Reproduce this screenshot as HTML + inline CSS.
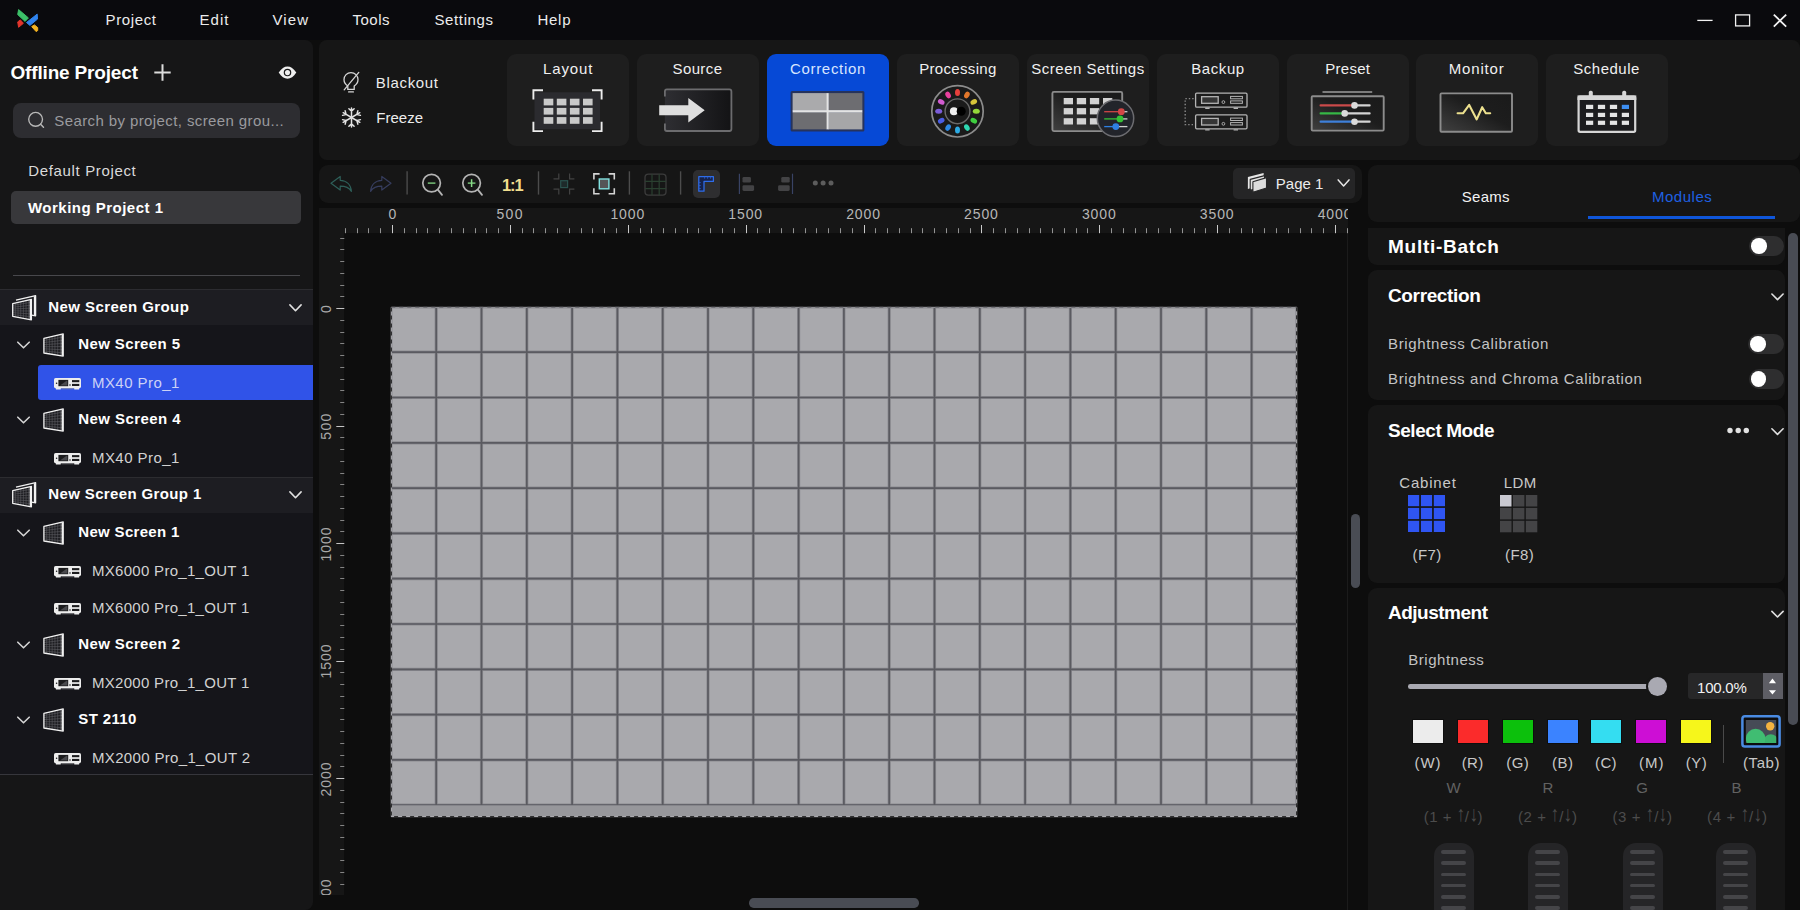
<!DOCTYPE html>
<html lang="en">
<head>
<meta charset="utf-8">
<title>Correction</title>
<style>
*{box-sizing:border-box;margin:0;padding:0}
html,body{width:1800px;height:910px;overflow:hidden;background:#0d0d0d}
body{position:relative;font-family:"Liberation Sans",sans-serif;color:#e6e6e6;font-size:15px}
.a{position:absolute}
.t{position:absolute;white-space:pre;line-height:20px;height:20px}
svg{position:absolute;overflow:visible}
#titlebar{left:0;top:0;width:1800px;height:40px;background:#0a0a0d}
#left{left:0;top:40px;width:313px;height:870px;background:#161617;border-radius:0 8px 8px 0}
#top{left:319px;top:40px;width:1481px;height:120px;background:#161616;border-radius:8px}
.tab{position:absolute;top:54px;width:122px;height:92px;background:#1e1e1e;border-radius:9px}
.tab.sel{background:#0649d6}
#ctb{left:319px;top:165px;width:1043px;height:37.5px;background:#161616;border-radius:9px}
#rtabs{left:1368px;top:165px;width:432px;height:57px;background:#161616;border-radius:9px}
.sec{position:absolute;left:1368px;width:417px;background:#161616;border-radius:9px}
.tog{position:absolute;width:34.6px;height:20px;border-radius:10px;background:#2e2e2f}
.tog i{position:absolute;left:1.8px;top:2.3px;width:15.6px;height:15.6px;border-radius:50%;background:#fff}
.sw{position:absolute;top:719px;width:31.5px;height:24.8px;border:1px solid #0e0e0e}
.ar{display:inline-block;transform:scale(1.15,1.45);transform-origin:50% 82%}
.vs{position:absolute;top:843px;width:39.5px;height:80px;border-radius:13px;background:#252527}
.vs i{position:absolute;left:7px;width:25px;height:3.5px;border-radius:2px;background:#454548}
</style>
</head>
<body>
<!-- TITLE BAR -->
<div id="titlebar" class="a"></div>
<svg style="left:0;top:0" width="60" height="40" viewBox="0 0 60 40" stroke-linejoin="round" stroke-width="1">
<path d="M18.6 9.6 L28.4 17.9 L25.1 21.4 L17.7 14.6 Z" fill="#3cc068" stroke="#3cc068"/>
<path d="M37.2 14.1 L37.5 19.1 L29.9 25.4 L26.5 22.5 Z" fill="#2f83ee" stroke="#2f83ee"/>
<path d="M20.4 19.9 L23.4 23.3 L18.6 27.3 L17.7 21.9 Z" fill="#e2352c" stroke="#e2352c"/>
<path d="M34.4 24.9 L37.7 27.6 L37.7 30.5 L36.1 31.6 L31.7 26.6 Z" fill="#f4b321" stroke="#f4b321"/>
</svg>
<div class="t" style="left:105.50px;top:10.00px;font-size:15px;color:#ececec;letter-spacing:0.635px;">Project</div>
<div class="t" style="left:199.50px;top:10.00px;font-size:15px;color:#ececec;letter-spacing:1.047px;">Edit</div>
<div class="t" style="left:272.50px;top:10.00px;font-size:15px;color:#ececec;letter-spacing:1.083px;">View</div>
<div class="t" style="left:352.50px;top:10.00px;font-size:15px;color:#ececec;letter-spacing:0.492px;">Tools</div>
<div class="t" style="left:434.50px;top:10.00px;font-size:15px;color:#ececec;letter-spacing:0.614px;">Settings</div>
<div class="t" style="left:537.50px;top:10.00px;font-size:15px;color:#ececec;letter-spacing:0.714px;">Help</div>
<svg style="left:1690px;top:8px" width="104" height="24" viewBox="1690 8 104 24" fill="none" stroke="#f2f2f2">
<line x1="1697.3" y1="20.4" x2="1712.6" y2="20.4" stroke-width="1.3"/>
<rect x="1735.6" y="14.9" width="14" height="11" stroke-width="1.3"/>
<path d="M1773.8 14.6 L1786.2 26.6 M1786.2 14.6 L1773.8 26.6" stroke-width="1.8"/>
</svg>
<!-- LEFT PANEL -->
<div id="left" class="a"></div>
<div class="t" style="left:10.50px;top:63.00px;font-size:19px;font-weight:bold;color:#ffffff;letter-spacing:-0.169px;">Offline Project</div>
<svg style="left:0;top:0" width="1" height="1"><path d="M154.3 72.5 H170.7 M162.5 64.3 V80.7" stroke="#dcdcdc" stroke-width="2" fill="none"/></svg>
<svg style="left:278px;top:65px" width="19" height="15" viewBox="0 0 19 15">
<path d="M0.7 7.6 C3.4 3.2 6.3 1.4 9.5 1.4 C12.7 1.4 15.6 3.2 18.3 7.6 C15.6 12 12.7 13.8 9.5 13.8 C6.3 13.8 3.4 12 0.7 7.6 Z" fill="#efefef"/>
<circle cx="9.5" cy="7.6" r="3.75" fill="#161617"/>
<circle cx="9.5" cy="7.6" r="2.55" fill="#efefef"/>
</svg>
<div class="a" style="left:13px;top:103px;width:287px;height:34.5px;border-radius:8px;background:#2d2d31"></div>
<svg style="left:0;top:0" width="1" height="1"><circle cx="35.6" cy="119.3" r="6.9" fill="none" stroke="#b8b8b8" stroke-width="1.35"/><path d="M40.6 124.3 L43.5 127.2" stroke="#b8b8b8" stroke-width="1.45" stroke-linecap="round"/></svg>
<div class="t" style="left:54.30px;top:111.00px;font-size:15px;color:#9a9a9e;letter-spacing:0.397px;">Search by project, screen grou...</div>
<div class="t" style="left:28.30px;top:161.00px;font-size:15px;color:#dadada;letter-spacing:0.651px;">Default Project</div>
<div class="a" style="left:11px;top:191px;width:290px;height:33px;border-radius:5px;background:#38383b"></div>
<div class="t" style="left:28.00px;top:198.00px;font-size:15px;font-weight:bold;color:#ffffff;letter-spacing:0.483px;">Working Project 1</div>
<div class="a" style="left:13px;top:275px;width:287px;height:1px;background:#48484c"></div>
<div class="a" style="left:0;top:288.5px;width:313px;height:486.5px;background:#15151a;border-top:1px solid #2c2c30;border-bottom:1.5px solid #36363c"></div>
<div class="a" style="left:0;top:289.5px;width:313px;height:35.5px;background:#1d1d22"></div>
<svg style="left:12px;top:294.8px" width="25" height="26" viewBox="0 0 25 26"><path d="M4 5.2 L23.6 0.7 L23.6 20.8 L19.6 20.2" fill="none" stroke="#f2f2f2" stroke-width="1.3" stroke-linejoin="round"/><path d="M22.5 1.2 L22.5 20.4" stroke="#f2f2f2" stroke-width="1.3"/><path d="M0.7 8.6 L19.4 4.3 L19.4 24.8 L0.7 21.3 Z" fill="#1b1b1f"/><line x1="3.37" y1="7.99" x2="3.37" y2="21.80" stroke="#5c5c61" stroke-width="0.6"/><line x1="6.04" y1="7.37" x2="6.04" y2="22.30" stroke="#5c5c61" stroke-width="0.6"/><line x1="8.71" y1="6.76" x2="8.71" y2="22.80" stroke="#5c5c61" stroke-width="0.6"/><line x1="11.39" y1="6.14" x2="11.39" y2="23.30" stroke="#5c5c61" stroke-width="0.6"/><line x1="14.06" y1="5.53" x2="14.06" y2="23.80" stroke="#5c5c61" stroke-width="0.6"/><line x1="16.73" y1="4.91" x2="16.73" y2="24.30" stroke="#5c5c61" stroke-width="0.6"/><line x1="0.7" y1="10.41" x2="19.4" y2="7.23" stroke="#5c5c61" stroke-width="0.6"/><line x1="0.7" y1="12.23" x2="19.4" y2="10.16" stroke="#5c5c61" stroke-width="0.6"/><line x1="0.7" y1="14.04" x2="19.4" y2="13.09" stroke="#5c5c61" stroke-width="0.6"/><line x1="0.7" y1="15.86" x2="19.4" y2="16.01" stroke="#5c5c61" stroke-width="0.6"/><line x1="0.7" y1="17.67" x2="19.4" y2="18.94" stroke="#5c5c61" stroke-width="0.6"/><line x1="0.7" y1="19.49" x2="19.4" y2="21.87" stroke="#5c5c61" stroke-width="0.6"/><path d="M0.7 8.6 L19.4 4.3 L19.4 24.8 L0.7 21.3 Z" fill="none" stroke="#f2f2f2" stroke-width="1.3" stroke-linejoin="round"/><path d="M18.4 4.8 L18.4 24.4" stroke="#f2f2f2" stroke-width="1.4"/></svg>
<div class="t" style="left:48.30px;top:297.00px;font-size:15px;font-weight:bold;color:#ffffff;letter-spacing:0.420px;">New Screen Group</div>
<svg style="left:0;top:0" width="1" height="1"><path d="M289.90 304.90 l5.60 5.80 l5.60 -5.80" fill="none" stroke="#e0e0e0" stroke-width="1.6" stroke-linecap="round" stroke-linejoin="round"/></svg>
<svg style="left:0;top:0" width="1" height="1"><path d="M17.80 342.20 l5.70 5.60 l5.70 -5.60" fill="none" stroke="#d4d4d4" stroke-width="1.6" stroke-linecap="round" stroke-linejoin="round"/></svg>
<svg style="left:43px;top:333.3px" width="22" height="24" viewBox="0 0 22 24"><path d="M0.9 5.4 L20.2 0.9 L20.2 23.1 L0.9 20 Z" fill="#1c1c20"/><line x1="3.66" y1="4.76" x2="3.66" y2="20.44" stroke="#5c5c61" stroke-width="0.6"/><line x1="6.41" y1="4.11" x2="6.41" y2="20.89" stroke="#5c5c61" stroke-width="0.6"/><line x1="9.17" y1="3.47" x2="9.17" y2="21.33" stroke="#5c5c61" stroke-width="0.6"/><line x1="11.93" y1="2.83" x2="11.93" y2="21.77" stroke="#5c5c61" stroke-width="0.6"/><line x1="14.69" y1="2.19" x2="14.69" y2="22.21" stroke="#5c5c61" stroke-width="0.6"/><line x1="17.44" y1="1.54" x2="17.44" y2="22.66" stroke="#5c5c61" stroke-width="0.6"/><line x1="0.9" y1="7.49" x2="20.2" y2="4.07" stroke="#5c5c61" stroke-width="0.6"/><line x1="0.9" y1="9.57" x2="20.2" y2="7.24" stroke="#5c5c61" stroke-width="0.6"/><line x1="0.9" y1="11.66" x2="20.2" y2="10.41" stroke="#5c5c61" stroke-width="0.6"/><line x1="0.9" y1="13.74" x2="20.2" y2="13.59" stroke="#5c5c61" stroke-width="0.6"/><line x1="0.9" y1="15.83" x2="20.2" y2="16.76" stroke="#5c5c61" stroke-width="0.6"/><line x1="0.9" y1="17.91" x2="20.2" y2="19.93" stroke="#5c5c61" stroke-width="0.6"/><path d="M0.9 5.4 L20.2 0.9 L20.2 23.1 L0.9 20 Z" fill="none" stroke="#f2f2f2" stroke-width="1.3" stroke-linejoin="round"/><path d="M19.3 1.4 L19.3 22.7" stroke="#f2f2f2" stroke-width="1.4"/></svg>
<div class="t" style="left:78.30px;top:334.00px;font-size:15px;font-weight:bold;color:#ffffff;letter-spacing:0.376px;">New Screen 5</div>
<div class="a" style="left:38px;top:365px;width:275px;height:35px;border-radius:3px 0 0 3px;background:#3053e8"></div>
<svg style="left:54.2px;top:378.0px" width="27" height="12" viewBox="0 0 27 12"><rect x="0" y="0" width="27" height="10.2" rx="1.6" fill="#ededed"/><rect x="1.8" y="9.6" width="5" height="2" rx="0.7" fill="#ededed"/><rect x="20.2" y="9.6" width="5" height="2" rx="0.7" fill="#ededed"/><rect x="7.4" y="10.5" width="12.2" height="0.7" fill="#8c8c90"/><rect x="4.4" y="1.9" width="9.8" height="6.3" fill="#1b1b1d"/><path d="M6 7.4 L12.6 2.7 L13.4 2.7 L13.4 7.4 Z" fill="#4a4a4e"/><circle cx="2.6" cy="5.2" r="0.8" fill="#1b1b1d"/><circle cx="16" cy="7" r="0.8" fill="#1b1b1d"/><rect x="18" y="2.1" width="7.3" height="2.1" fill="#1b1b1d"/><rect x="18" y="5.9" width="7.3" height="2.1" fill="#1b1b1d"/></svg>
<div class="t" style="left:92.00px;top:373.00px;font-size:15px;color:#ccd2f6;letter-spacing:0.434px;">MX40 Pro_1</div>
<svg style="left:0;top:0" width="1" height="1"><path d="M17.80 417.20 l5.70 5.60 l5.70 -5.60" fill="none" stroke="#d4d4d4" stroke-width="1.6" stroke-linecap="round" stroke-linejoin="round"/></svg>
<svg style="left:43px;top:408.3px" width="22" height="24" viewBox="0 0 22 24"><path d="M0.9 5.4 L20.2 0.9 L20.2 23.1 L0.9 20 Z" fill="#1c1c20"/><line x1="3.66" y1="4.76" x2="3.66" y2="20.44" stroke="#5c5c61" stroke-width="0.6"/><line x1="6.41" y1="4.11" x2="6.41" y2="20.89" stroke="#5c5c61" stroke-width="0.6"/><line x1="9.17" y1="3.47" x2="9.17" y2="21.33" stroke="#5c5c61" stroke-width="0.6"/><line x1="11.93" y1="2.83" x2="11.93" y2="21.77" stroke="#5c5c61" stroke-width="0.6"/><line x1="14.69" y1="2.19" x2="14.69" y2="22.21" stroke="#5c5c61" stroke-width="0.6"/><line x1="17.44" y1="1.54" x2="17.44" y2="22.66" stroke="#5c5c61" stroke-width="0.6"/><line x1="0.9" y1="7.49" x2="20.2" y2="4.07" stroke="#5c5c61" stroke-width="0.6"/><line x1="0.9" y1="9.57" x2="20.2" y2="7.24" stroke="#5c5c61" stroke-width="0.6"/><line x1="0.9" y1="11.66" x2="20.2" y2="10.41" stroke="#5c5c61" stroke-width="0.6"/><line x1="0.9" y1="13.74" x2="20.2" y2="13.59" stroke="#5c5c61" stroke-width="0.6"/><line x1="0.9" y1="15.83" x2="20.2" y2="16.76" stroke="#5c5c61" stroke-width="0.6"/><line x1="0.9" y1="17.91" x2="20.2" y2="19.93" stroke="#5c5c61" stroke-width="0.6"/><path d="M0.9 5.4 L20.2 0.9 L20.2 23.1 L0.9 20 Z" fill="none" stroke="#f2f2f2" stroke-width="1.3" stroke-linejoin="round"/><path d="M19.3 1.4 L19.3 22.7" stroke="#f2f2f2" stroke-width="1.4"/></svg>
<div class="t" style="left:78.30px;top:409.00px;font-size:15px;font-weight:bold;color:#ffffff;letter-spacing:0.422px;">New Screen 4</div>
<svg style="left:54.2px;top:453.0px" width="27" height="12" viewBox="0 0 27 12"><rect x="0" y="0" width="27" height="10.2" rx="1.6" fill="#ededed"/><rect x="1.8" y="9.6" width="5" height="2" rx="0.7" fill="#ededed"/><rect x="20.2" y="9.6" width="5" height="2" rx="0.7" fill="#ededed"/><rect x="7.4" y="10.5" width="12.2" height="0.7" fill="#8c8c90"/><rect x="4.4" y="1.9" width="9.8" height="6.3" fill="#1b1b1d"/><path d="M6 7.4 L12.6 2.7 L13.4 2.7 L13.4 7.4 Z" fill="#4a4a4e"/><circle cx="2.6" cy="5.2" r="0.8" fill="#1b1b1d"/><circle cx="16" cy="7" r="0.8" fill="#1b1b1d"/><rect x="18" y="2.1" width="7.3" height="2.1" fill="#1b1b1d"/><rect x="18" y="5.9" width="7.3" height="2.1" fill="#1b1b1d"/></svg>
<div class="t" style="left:92.00px;top:448.00px;font-size:15px;color:#d2d2d2;letter-spacing:0.434px;">MX40 Pro_1</div>
<div class="a" style="left:0;top:477px;width:313px;height:1px;background:#2c2c30"></div>
<div class="a" style="left:0;top:478px;width:313px;height:34.5px;background:#1d1d22"></div>
<svg style="left:12px;top:481.8px" width="25" height="26" viewBox="0 0 25 26"><path d="M4 5.2 L23.6 0.7 L23.6 20.8 L19.6 20.2" fill="none" stroke="#f2f2f2" stroke-width="1.3" stroke-linejoin="round"/><path d="M22.5 1.2 L22.5 20.4" stroke="#f2f2f2" stroke-width="1.3"/><path d="M0.7 8.6 L19.4 4.3 L19.4 24.8 L0.7 21.3 Z" fill="#1b1b1f"/><line x1="3.37" y1="7.99" x2="3.37" y2="21.80" stroke="#5c5c61" stroke-width="0.6"/><line x1="6.04" y1="7.37" x2="6.04" y2="22.30" stroke="#5c5c61" stroke-width="0.6"/><line x1="8.71" y1="6.76" x2="8.71" y2="22.80" stroke="#5c5c61" stroke-width="0.6"/><line x1="11.39" y1="6.14" x2="11.39" y2="23.30" stroke="#5c5c61" stroke-width="0.6"/><line x1="14.06" y1="5.53" x2="14.06" y2="23.80" stroke="#5c5c61" stroke-width="0.6"/><line x1="16.73" y1="4.91" x2="16.73" y2="24.30" stroke="#5c5c61" stroke-width="0.6"/><line x1="0.7" y1="10.41" x2="19.4" y2="7.23" stroke="#5c5c61" stroke-width="0.6"/><line x1="0.7" y1="12.23" x2="19.4" y2="10.16" stroke="#5c5c61" stroke-width="0.6"/><line x1="0.7" y1="14.04" x2="19.4" y2="13.09" stroke="#5c5c61" stroke-width="0.6"/><line x1="0.7" y1="15.86" x2="19.4" y2="16.01" stroke="#5c5c61" stroke-width="0.6"/><line x1="0.7" y1="17.67" x2="19.4" y2="18.94" stroke="#5c5c61" stroke-width="0.6"/><line x1="0.7" y1="19.49" x2="19.4" y2="21.87" stroke="#5c5c61" stroke-width="0.6"/><path d="M0.7 8.6 L19.4 4.3 L19.4 24.8 L0.7 21.3 Z" fill="none" stroke="#f2f2f2" stroke-width="1.3" stroke-linejoin="round"/><path d="M18.4 4.8 L18.4 24.4" stroke="#f2f2f2" stroke-width="1.4"/></svg>
<div class="t" style="left:48.30px;top:484.00px;font-size:15px;font-weight:bold;color:#ffffff;letter-spacing:0.369px;">New Screen Group 1</div>
<svg style="left:0;top:0" width="1" height="1"><path d="M289.90 491.90 l5.60 5.80 l5.60 -5.80" fill="none" stroke="#e0e0e0" stroke-width="1.6" stroke-linecap="round" stroke-linejoin="round"/></svg>
<svg style="left:0;top:0" width="1" height="1"><path d="M17.80 530.20 l5.70 5.60 l5.70 -5.60" fill="none" stroke="#d4d4d4" stroke-width="1.6" stroke-linecap="round" stroke-linejoin="round"/></svg>
<svg style="left:43px;top:521.3px" width="22" height="24" viewBox="0 0 22 24"><path d="M0.9 5.4 L20.2 0.9 L20.2 23.1 L0.9 20 Z" fill="#1c1c20"/><line x1="3.66" y1="4.76" x2="3.66" y2="20.44" stroke="#5c5c61" stroke-width="0.6"/><line x1="6.41" y1="4.11" x2="6.41" y2="20.89" stroke="#5c5c61" stroke-width="0.6"/><line x1="9.17" y1="3.47" x2="9.17" y2="21.33" stroke="#5c5c61" stroke-width="0.6"/><line x1="11.93" y1="2.83" x2="11.93" y2="21.77" stroke="#5c5c61" stroke-width="0.6"/><line x1="14.69" y1="2.19" x2="14.69" y2="22.21" stroke="#5c5c61" stroke-width="0.6"/><line x1="17.44" y1="1.54" x2="17.44" y2="22.66" stroke="#5c5c61" stroke-width="0.6"/><line x1="0.9" y1="7.49" x2="20.2" y2="4.07" stroke="#5c5c61" stroke-width="0.6"/><line x1="0.9" y1="9.57" x2="20.2" y2="7.24" stroke="#5c5c61" stroke-width="0.6"/><line x1="0.9" y1="11.66" x2="20.2" y2="10.41" stroke="#5c5c61" stroke-width="0.6"/><line x1="0.9" y1="13.74" x2="20.2" y2="13.59" stroke="#5c5c61" stroke-width="0.6"/><line x1="0.9" y1="15.83" x2="20.2" y2="16.76" stroke="#5c5c61" stroke-width="0.6"/><line x1="0.9" y1="17.91" x2="20.2" y2="19.93" stroke="#5c5c61" stroke-width="0.6"/><path d="M0.9 5.4 L20.2 0.9 L20.2 23.1 L0.9 20 Z" fill="none" stroke="#f2f2f2" stroke-width="1.3" stroke-linejoin="round"/><path d="M19.3 1.4 L19.3 22.7" stroke="#f2f2f2" stroke-width="1.4"/></svg>
<div class="t" style="left:78.30px;top:522.00px;font-size:15px;font-weight:bold;color:#ffffff;letter-spacing:0.313px;">New Screen 1</div>
<svg style="left:54.2px;top:566.0px" width="27" height="12" viewBox="0 0 27 12"><rect x="0" y="0" width="27" height="10.2" rx="1.6" fill="#ededed"/><rect x="1.8" y="9.6" width="5" height="2" rx="0.7" fill="#ededed"/><rect x="20.2" y="9.6" width="5" height="2" rx="0.7" fill="#ededed"/><rect x="7.4" y="10.5" width="12.2" height="0.7" fill="#8c8c90"/><rect x="4.4" y="1.9" width="9.8" height="6.3" fill="#1b1b1d"/><path d="M6 7.4 L12.6 2.7 L13.4 2.7 L13.4 7.4 Z" fill="#4a4a4e"/><circle cx="2.6" cy="5.2" r="0.8" fill="#1b1b1d"/><circle cx="16" cy="7" r="0.8" fill="#1b1b1d"/><rect x="18" y="2.1" width="7.3" height="2.1" fill="#1b1b1d"/><rect x="18" y="5.9" width="7.3" height="2.1" fill="#1b1b1d"/></svg>
<div class="t" style="left:92.00px;top:561.00px;font-size:15px;color:#d2d2d2;letter-spacing:0.293px;">MX6000 Pro_1_OUT 1</div>
<svg style="left:54.2px;top:603.0px" width="27" height="12" viewBox="0 0 27 12"><rect x="0" y="0" width="27" height="10.2" rx="1.6" fill="#ededed"/><rect x="1.8" y="9.6" width="5" height="2" rx="0.7" fill="#ededed"/><rect x="20.2" y="9.6" width="5" height="2" rx="0.7" fill="#ededed"/><rect x="7.4" y="10.5" width="12.2" height="0.7" fill="#8c8c90"/><rect x="4.4" y="1.9" width="9.8" height="6.3" fill="#1b1b1d"/><path d="M6 7.4 L12.6 2.7 L13.4 2.7 L13.4 7.4 Z" fill="#4a4a4e"/><circle cx="2.6" cy="5.2" r="0.8" fill="#1b1b1d"/><circle cx="16" cy="7" r="0.8" fill="#1b1b1d"/><rect x="18" y="2.1" width="7.3" height="2.1" fill="#1b1b1d"/><rect x="18" y="5.9" width="7.3" height="2.1" fill="#1b1b1d"/></svg>
<div class="t" style="left:92.00px;top:598.00px;font-size:15px;color:#d2d2d2;letter-spacing:0.293px;">MX6000 Pro_1_OUT 1</div>
<svg style="left:0;top:0" width="1" height="1"><path d="M17.80 642.20 l5.70 5.60 l5.70 -5.60" fill="none" stroke="#d4d4d4" stroke-width="1.6" stroke-linecap="round" stroke-linejoin="round"/></svg>
<svg style="left:43px;top:633.3px" width="22" height="24" viewBox="0 0 22 24"><path d="M0.9 5.4 L20.2 0.9 L20.2 23.1 L0.9 20 Z" fill="#1c1c20"/><line x1="3.66" y1="4.76" x2="3.66" y2="20.44" stroke="#5c5c61" stroke-width="0.6"/><line x1="6.41" y1="4.11" x2="6.41" y2="20.89" stroke="#5c5c61" stroke-width="0.6"/><line x1="9.17" y1="3.47" x2="9.17" y2="21.33" stroke="#5c5c61" stroke-width="0.6"/><line x1="11.93" y1="2.83" x2="11.93" y2="21.77" stroke="#5c5c61" stroke-width="0.6"/><line x1="14.69" y1="2.19" x2="14.69" y2="22.21" stroke="#5c5c61" stroke-width="0.6"/><line x1="17.44" y1="1.54" x2="17.44" y2="22.66" stroke="#5c5c61" stroke-width="0.6"/><line x1="0.9" y1="7.49" x2="20.2" y2="4.07" stroke="#5c5c61" stroke-width="0.6"/><line x1="0.9" y1="9.57" x2="20.2" y2="7.24" stroke="#5c5c61" stroke-width="0.6"/><line x1="0.9" y1="11.66" x2="20.2" y2="10.41" stroke="#5c5c61" stroke-width="0.6"/><line x1="0.9" y1="13.74" x2="20.2" y2="13.59" stroke="#5c5c61" stroke-width="0.6"/><line x1="0.9" y1="15.83" x2="20.2" y2="16.76" stroke="#5c5c61" stroke-width="0.6"/><line x1="0.9" y1="17.91" x2="20.2" y2="19.93" stroke="#5c5c61" stroke-width="0.6"/><path d="M0.9 5.4 L20.2 0.9 L20.2 23.1 L0.9 20 Z" fill="none" stroke="#f2f2f2" stroke-width="1.3" stroke-linejoin="round"/><path d="M19.3 1.4 L19.3 22.7" stroke="#f2f2f2" stroke-width="1.4"/></svg>
<div class="t" style="left:78.30px;top:634.00px;font-size:15px;font-weight:bold;color:#ffffff;letter-spacing:0.376px;">New Screen 2</div>
<svg style="left:54.2px;top:678.0px" width="27" height="12" viewBox="0 0 27 12"><rect x="0" y="0" width="27" height="10.2" rx="1.6" fill="#ededed"/><rect x="1.8" y="9.6" width="5" height="2" rx="0.7" fill="#ededed"/><rect x="20.2" y="9.6" width="5" height="2" rx="0.7" fill="#ededed"/><rect x="7.4" y="10.5" width="12.2" height="0.7" fill="#8c8c90"/><rect x="4.4" y="1.9" width="9.8" height="6.3" fill="#1b1b1d"/><path d="M6 7.4 L12.6 2.7 L13.4 2.7 L13.4 7.4 Z" fill="#4a4a4e"/><circle cx="2.6" cy="5.2" r="0.8" fill="#1b1b1d"/><circle cx="16" cy="7" r="0.8" fill="#1b1b1d"/><rect x="18" y="2.1" width="7.3" height="2.1" fill="#1b1b1d"/><rect x="18" y="5.9" width="7.3" height="2.1" fill="#1b1b1d"/></svg>
<div class="t" style="left:92.00px;top:673.00px;font-size:15px;color:#d2d2d2;letter-spacing:0.293px;">MX2000 Pro_1_OUT 1</div>
<svg style="left:0;top:0" width="1" height="1"><path d="M17.80 717.20 l5.70 5.60 l5.70 -5.60" fill="none" stroke="#d4d4d4" stroke-width="1.6" stroke-linecap="round" stroke-linejoin="round"/></svg>
<svg style="left:43px;top:708.3px" width="22" height="24" viewBox="0 0 22 24"><path d="M0.9 5.4 L20.2 0.9 L20.2 23.1 L0.9 20 Z" fill="#1c1c20"/><line x1="3.66" y1="4.76" x2="3.66" y2="20.44" stroke="#5c5c61" stroke-width="0.6"/><line x1="6.41" y1="4.11" x2="6.41" y2="20.89" stroke="#5c5c61" stroke-width="0.6"/><line x1="9.17" y1="3.47" x2="9.17" y2="21.33" stroke="#5c5c61" stroke-width="0.6"/><line x1="11.93" y1="2.83" x2="11.93" y2="21.77" stroke="#5c5c61" stroke-width="0.6"/><line x1="14.69" y1="2.19" x2="14.69" y2="22.21" stroke="#5c5c61" stroke-width="0.6"/><line x1="17.44" y1="1.54" x2="17.44" y2="22.66" stroke="#5c5c61" stroke-width="0.6"/><line x1="0.9" y1="7.49" x2="20.2" y2="4.07" stroke="#5c5c61" stroke-width="0.6"/><line x1="0.9" y1="9.57" x2="20.2" y2="7.24" stroke="#5c5c61" stroke-width="0.6"/><line x1="0.9" y1="11.66" x2="20.2" y2="10.41" stroke="#5c5c61" stroke-width="0.6"/><line x1="0.9" y1="13.74" x2="20.2" y2="13.59" stroke="#5c5c61" stroke-width="0.6"/><line x1="0.9" y1="15.83" x2="20.2" y2="16.76" stroke="#5c5c61" stroke-width="0.6"/><line x1="0.9" y1="17.91" x2="20.2" y2="19.93" stroke="#5c5c61" stroke-width="0.6"/><path d="M0.9 5.4 L20.2 0.9 L20.2 23.1 L0.9 20 Z" fill="none" stroke="#f2f2f2" stroke-width="1.3" stroke-linejoin="round"/><path d="M19.3 1.4 L19.3 22.7" stroke="#f2f2f2" stroke-width="1.4"/></svg>
<div class="t" style="left:78.30px;top:709.00px;font-size:15px;font-weight:bold;color:#ffffff;letter-spacing:0.352px;">ST 2110</div>
<svg style="left:54.2px;top:753.0px" width="27" height="12" viewBox="0 0 27 12"><rect x="0" y="0" width="27" height="10.2" rx="1.6" fill="#ededed"/><rect x="1.8" y="9.6" width="5" height="2" rx="0.7" fill="#ededed"/><rect x="20.2" y="9.6" width="5" height="2" rx="0.7" fill="#ededed"/><rect x="7.4" y="10.5" width="12.2" height="0.7" fill="#8c8c90"/><rect x="4.4" y="1.9" width="9.8" height="6.3" fill="#1b1b1d"/><path d="M6 7.4 L12.6 2.7 L13.4 2.7 L13.4 7.4 Z" fill="#4a4a4e"/><circle cx="2.6" cy="5.2" r="0.8" fill="#1b1b1d"/><circle cx="16" cy="7" r="0.8" fill="#1b1b1d"/><rect x="18" y="2.1" width="7.3" height="2.1" fill="#1b1b1d"/><rect x="18" y="5.9" width="7.3" height="2.1" fill="#1b1b1d"/></svg>
<div class="t" style="left:92.00px;top:748.00px;font-size:15px;color:#d2d2d2;letter-spacing:0.335px;">MX2000 Pro_1_OUT 2</div>
<!-- TOP PANEL -->
<div id="top" class="a"></div>
<svg style="left:340px;top:70px" width="24" height="26" viewBox="340 70 24 26" fill="none" stroke="#d6d6d6" stroke-width="1.3" stroke-linecap="round">
<path d="M347.8 89.4 V86 C345.5 84.6 344 82.3 344 79.6 C344 75.7 347.1 72.6 351 72.6 C354.9 72.6 358 75.7 358 79.6 C358 82.3 356.5 84.6 354.2 86 V89.4 Z"/>
<path d="M348.6 91.9 H353.4"/>
<path d="M344.2 89.8 L358.8 72.4"/>
</svg>
<div class="t" style="left:375.80px;top:73.00px;font-size:15px;color:#ececec;letter-spacing:0.665px;">Blackout</div>
<svg style="left:341px;top:107px" width="21" height="21" viewBox="-10.5 -10.5 21 21" fill="none" stroke="#e2e2e2" stroke-width="1.5" stroke-linecap="round"><g transform="rotate(0)"><path d="M0 0 V-9.6 M-2.6 -8.8 L0 -6.2 L2.6 -8.8"/></g><g transform="rotate(60)"><path d="M0 0 V-9.6 M-2.6 -8.8 L0 -6.2 L2.6 -8.8"/></g><g transform="rotate(120)"><path d="M0 0 V-9.6 M-2.6 -8.8 L0 -6.2 L2.6 -8.8"/></g><g transform="rotate(180)"><path d="M0 0 V-9.6 M-2.6 -8.8 L0 -6.2 L2.6 -8.8"/></g><g transform="rotate(240)"><path d="M0 0 V-9.6 M-2.6 -8.8 L0 -6.2 L2.6 -8.8"/></g><g transform="rotate(300)"><path d="M0 0 V-9.6 M-2.6 -8.8 L0 -6.2 L2.6 -8.8"/></g></svg>
<div class="t" style="left:376.30px;top:108.00px;font-size:15px;color:#ececec;letter-spacing:0.002px;">Freeze</div>
<div class="tab" style="left:507px"></div>
<div class="t" style="left:543.00px;top:59.00px;font-size:15px;color:#f0f0f0;letter-spacing:0.891px;">Layout</div>
<div class="tab" style="left:637px"></div>
<div class="t" style="left:672.50px;top:59.00px;font-size:15px;color:#f0f0f0;letter-spacing:0.394px;">Source</div>
<div class="tab sel" style="left:767px"></div>
<div class="t" style="left:790.00px;top:59.00px;font-size:15px;color:#d8e5ff;letter-spacing:0.677px;">Correction</div>
<div class="tab" style="left:897px"></div>
<div class="t" style="left:919.20px;top:59.00px;font-size:15px;color:#f0f0f0;letter-spacing:0.322px;">Processing</div>
<div class="tab" style="left:1027px"></div>
<div class="t" style="left:1031.30px;top:59.00px;font-size:15px;color:#f0f0f0;letter-spacing:0.500px;">Screen Settings</div>
<div class="tab" style="left:1157px"></div>
<div class="t" style="left:1191.20px;top:59.00px;font-size:15px;color:#f0f0f0;letter-spacing:0.591px;">Backup</div>
<div class="tab" style="left:1287px"></div>
<div class="t" style="left:1325.30px;top:59.00px;font-size:15px;color:#f0f0f0;letter-spacing:0.268px;">Preset</div>
<div class="tab" style="left:1416px"></div>
<div class="t" style="left:1448.70px;top:59.00px;font-size:15px;color:#f0f0f0;letter-spacing:0.845px;">Monitor</div>
<div class="tab" style="left:1546px"></div>
<div class="t" style="left:1573.30px;top:59.00px;font-size:15px;color:#f0f0f0;letter-spacing:0.505px;">Schedule</div>
<svg style="left:0;top:0" width="1800" height="160" viewBox="0 0 1800 160">
<defs>
<linearGradient id="gs" x1="0" y1="0" x2="1" y2="0"><stop offset="0" stop-color="#2e2e32"/><stop offset="1" stop-color="#131315"/></linearGradient>
<linearGradient id="gd" x1="0" y1="1" x2="1" y2="0"><stop offset="0" stop-color="#404040"/><stop offset="0.55" stop-color="#1d1d1d"/><stop offset="1" stop-color="#1a1a1a"/></linearGradient>
</defs>
<g><rect x="534.5" y="92.2" width="65.6" height="37" fill="#2b2b2f"/><path d="M533.4 99.6 V90.3 H543 M592 90.3 H601.6 V99.6 M601.6 121.8 V131.1 H592 M543 131.1 H533.4 V121.8" fill="none" stroke="#ececec" stroke-width="1.9"/><rect x="543.7" y="98.7" width="9.6" height="6.7" fill="#c9c9c9"/><rect x="543.7" y="107.9" width="9.6" height="6.7" fill="#c9c9c9"/><rect x="543.7" y="117.1" width="9.6" height="6.7" fill="#c9c9c9"/><rect x="556.8" y="98.7" width="9.6" height="6.7" fill="#c9c9c9"/><rect x="556.8" y="107.9" width="9.6" height="6.7" fill="#c9c9c9"/><rect x="556.8" y="117.1" width="9.6" height="6.7" fill="#c9c9c9"/><rect x="569.9" y="98.7" width="9.6" height="6.7" fill="#c9c9c9"/><rect x="569.9" y="107.9" width="9.6" height="6.7" fill="#c9c9c9"/><rect x="569.9" y="117.1" width="9.6" height="6.7" fill="#c9c9c9"/><rect x="583.0" y="98.7" width="9.6" height="6.7" fill="#c9c9c9"/><rect x="583.0" y="107.9" width="9.6" height="6.7" fill="#c9c9c9"/><rect x="583.0" y="117.1" width="9.6" height="6.7" fill="#c9c9c9"/></g>
<g>
<rect x="664.9" y="89.4" width="66.5" height="41.6" rx="2" fill="url(#gs)"/>
<path d="M664.9 96.4 V91.4 a2 2 0 0 1 2 -2 H729.4 a2 2 0 0 1 2 2 V129 a2 2 0 0 1 -2 2 H666.9 a2 2 0 0 1 -2 -2 V123.6" fill="none" stroke="#6c6c6e" stroke-width="1.8"/>
<path d="M659.2 105.3 H688.3 V98 L704.7 110.3 L688.3 122.6 V115.3 H659.2 Z" fill="#dedede"/>
</g>
<g>
<rect x="790.6" y="91" width="73.8" height="40.4" rx="1.5" fill="#26335c"/>
<rect x="792.6" y="93.1" width="34.4" height="17.2" fill="#aaaaac"/>
<rect x="828.4" y="93.1" width="34" height="17.2" fill="#6d6d71"/>
<rect x="792.6" y="112.2" width="34.4" height="17.2" fill="#6d6d71"/>
<rect x="828.4" y="112.2" width="34" height="17.2" fill="#a6a6a8"/>
<rect x="826.6" y="93.1" width="2.1" height="36.3" fill="#e4e4e4"/>
<rect x="792.6" y="110.1" width="69.8" height="2.3" fill="#e4e4e4"/>
</g>
<g><circle cx="957.5" cy="111.3" r="25.7" fill="#1a1a1a" stroke="#8c8c8c" stroke-width="1.7"/><circle cx="957.5" cy="111.3" r="12.4" fill="none" stroke="#6a6a6a" stroke-width="1.4"/><ellipse cx="957.5" cy="92.5" rx="2.5" ry="3.5" fill="#e8403c" transform="rotate(0 957.5 111.3)"/><ellipse cx="957.5" cy="92.5" rx="2.5" ry="3.5" fill="#e2772b" transform="rotate(30 957.5 111.3)"/><ellipse cx="957.5" cy="92.5" rx="2.5" ry="3.5" fill="#d6c43a" transform="rotate(60 957.5 111.3)"/><ellipse cx="957.5" cy="92.5" rx="2.5" ry="3.5" fill="#93d63a" transform="rotate(90 957.5 111.3)"/><ellipse cx="957.5" cy="92.5" rx="2.5" ry="3.5" fill="#3fce3f" transform="rotate(120 957.5 111.3)"/><ellipse cx="957.5" cy="92.5" rx="2.5" ry="3.5" fill="#2ed8b2" transform="rotate(150 957.5 111.3)"/><ellipse cx="957.5" cy="92.5" rx="2.5" ry="3.5" fill="#2cabe4" transform="rotate(180 957.5 111.3)"/><ellipse cx="957.5" cy="92.5" rx="2.5" ry="3.5" fill="#2c8ae4" transform="rotate(210 957.5 111.3)"/><ellipse cx="957.5" cy="92.5" rx="2.5" ry="3.5" fill="#4a5ee4" transform="rotate(240 957.5 111.3)"/><ellipse cx="957.5" cy="92.5" rx="2.5" ry="3.5" fill="#7b5cd8" transform="rotate(270 957.5 111.3)"/><ellipse cx="957.5" cy="92.5" rx="2.5" ry="3.5" fill="#d25cd0" transform="rotate(300 957.5 111.3)"/><ellipse cx="957.5" cy="92.5" rx="2.5" ry="3.5" fill="#e8409e" transform="rotate(330 957.5 111.3)"/><circle cx="953.9" cy="111.3" r="4" fill="#f0f0f0"/><circle cx="961.2" cy="111.3" r="4.5" fill="#000"/></g>
<g><rect x="1052.4" y="91.9" width="69.8" height="39.2" rx="1.5" fill="url(#gd)" stroke="#8c8c8c" stroke-width="1.9"/><rect x="1063.7" y="98.0" width="9.3" height="6.3" fill="#d2d2d2"/><rect x="1063.7" y="108.1" width="9.3" height="6.3" fill="#d2d2d2"/><rect x="1063.7" y="118.2" width="9.3" height="6.3" fill="#d2d2d2"/><rect x="1076.8" y="98.0" width="9.3" height="6.3" fill="#d2d2d2"/><rect x="1076.8" y="108.1" width="9.3" height="6.3" fill="#d2d2d2"/><rect x="1076.8" y="118.2" width="9.3" height="6.3" fill="#d2d2d2"/><rect x="1089.9" y="98.0" width="9.3" height="6.3" fill="#d2d2d2"/><rect x="1089.9" y="108.1" width="9.3" height="6.3" fill="#d2d2d2"/><rect x="1089.9" y="118.2" width="9.3" height="6.3" fill="#d2d2d2"/><rect x="1103.0" y="98.0" width="9.3" height="6.3" fill="#d2d2d2"/><rect x="1103.0" y="108.1" width="9.3" height="6.3" fill="#d2d2d2"/><rect x="1103.0" y="118.2" width="9.3" height="6.3" fill="#d2d2d2"/><circle cx="1115.5" cy="118.3" r="18.2" fill="#22242a" stroke="#6c6c70" stroke-width="1.5"/><line x1="1104.2" y1="111.7" x2="1121.3" y2="111.7" stroke="#d24646" stroke-width="1.3"/><line x1="1121.3" y1="111.7" x2="1127.4" y2="111.7" stroke="#cfcfcf" stroke-width="1.3"/><circle cx="1121.3" cy="111.7" r="3.4" fill="#d24646"/><line x1="1104.2" y1="118.9" x2="1120" y2="118.9" stroke="#36c236" stroke-width="1.3"/><line x1="1120" y1="118.9" x2="1127.4" y2="118.9" stroke="#cfcfcf" stroke-width="1.3"/><circle cx="1120" cy="118.9" r="3.4" fill="#36c236"/><line x1="1104.2" y1="126.6" x2="1115.8" y2="126.6" stroke="#2f80e2" stroke-width="1.3"/><line x1="1115.8" y1="126.6" x2="1127.4" y2="126.6" stroke="#cfcfcf" stroke-width="1.3"/><circle cx="1115.8" cy="126.6" r="3.4" fill="#2f80e2"/></g>
<g fill="none" stroke="#b4b4b4" stroke-width="1.3"><rect x="1195.6" y="93.1" width="51.4" height="14" rx="1.2" fill="#1c1c1c"/><rect x="1201.6" y="96.7" width="16.6" height="6.6" fill="#353535"/><circle cx="1223.4" cy="102.1" r="1.4" stroke-width="0.9"/><rect x="1230.6" y="96.4" width="11.8" height="2.4" stroke-width="1"/><rect x="1230.6" y="100.9" width="11.8" height="2.4" stroke-width="1"/><path d="M1205.2 108.2 h4.4 M1233.6 108.2 h4.4" stroke-width="1.4"/><rect x="1195.6" y="114.8" width="51.4" height="14" rx="1.2" fill="#1c1c1c"/><rect x="1201.6" y="118.4" width="16.6" height="6.6" fill="#353535"/><circle cx="1223.4" cy="123.8" r="1.4" stroke-width="0.9"/><rect x="1230.6" y="118.10000000000001" width="11.8" height="2.4" stroke-width="1"/><rect x="1230.6" y="122.60000000000001" width="11.8" height="2.4" stroke-width="1"/><path d="M1205.2 129.9 h4.4 M1233.6 129.9 h4.4" stroke-width="1.4"/><path d="M1193.6 98.6 H1185.2 V124.6 H1193.6" stroke="#8a8a8a" stroke-width="1.4" stroke-dasharray="1.4 2"/></g>
<g><line x1="1322.5" y1="92" x2="1372.2" y2="92" stroke="#9c9c9c" stroke-width="1.4"/><rect x="1311.7" y="96.2" width="72" height="34.4" rx="1" fill="url(#gd)" stroke="#8c8c8c" stroke-width="1.9"/><line x1="1320.6" y1="105.4" x2="1354.5" y2="105.4" stroke="#ca4a4a" stroke-width="2.2" stroke-linecap="round"/><line x1="1354.5" y1="105.4" x2="1369.6" y2="105.4" stroke="#d4d4d4" stroke-width="2.2" stroke-linecap="round"/><circle cx="1354.5" cy="105.4" r="3.3" fill="#dadada"/><line x1="1320.6" y1="113.4" x2="1344.7" y2="113.4" stroke="#36b746" stroke-width="2.2" stroke-linecap="round"/><line x1="1344.7" y1="113.4" x2="1369.6" y2="113.4" stroke="#d4d4d4" stroke-width="2.2" stroke-linecap="round"/><circle cx="1344.7" cy="113.4" r="3.3" fill="#dadada"/><line x1="1320.6" y1="121.7" x2="1354.5" y2="121.7" stroke="#3e80da" stroke-width="2.2" stroke-linecap="round"/><line x1="1354.5" y1="121.7" x2="1369.6" y2="121.7" stroke="#d4d4d4" stroke-width="2.2" stroke-linecap="round"/><circle cx="1354.5" cy="121.7" r="3.3" fill="#dadada"/></g>
<g>
<rect x="1440.5" y="93.4" width="71.5" height="38.3" rx="1" fill="url(#gd)" stroke="#8c8c8c" stroke-width="1.9"/>
<path d="M1457.6 113.3 H1463 L1469.2 104.9 L1476.7 119.4 L1482.2 107.2 L1485.8 113.3 H1490.2" fill="none" stroke="#ece08e" stroke-width="2.1" stroke-linejoin="round" stroke-linecap="round"/>
</g>
<g><rect x="1578.6" y="96.6" width="56.6" height="35.2" rx="1.5" fill="#1c1c1e" stroke="#d6d6d6" stroke-width="2.2"/><rect x="1577.5" y="95.4" width="58.8" height="4.6" fill="#d6d6d6"/><rect x="1588.8" y="90.8" width="4" height="6" rx="1.6" fill="#d6d6d6"/><rect x="1622.2" y="90.8" width="4" height="6" rx="1.6" fill="#d6d6d6"/><rect x="1586.0" y="104.8" width="7.2" height="4.2" fill="#e4e4e4"/><rect x="1586.0" y="112.8" width="7.2" height="4.2" fill="#e4e4e4"/><rect x="1586.0" y="120.7" width="7.2" height="4.2" fill="#e4e4e4"/><rect x="1597.9" y="104.8" width="7.2" height="4.2" fill="#e4e4e4"/><rect x="1597.9" y="112.8" width="7.2" height="4.2" fill="#e4e4e4"/><rect x="1597.9" y="120.7" width="7.2" height="4.2" fill="#e4e4e4"/><rect x="1609.9" y="104.8" width="7.2" height="4.2" fill="#e4e4e4"/><rect x="1609.9" y="112.8" width="7.2" height="4.2" fill="#e4e4e4"/><rect x="1609.9" y="120.7" width="7.2" height="4.2" fill="#e4e4e4"/><rect x="1621.8" y="104.8" width="7.2" height="4.2" fill="#3d8ef2"/><rect x="1621.8" y="112.8" width="7.2" height="4.2" fill="#e4e4e4"/><rect x="1621.8" y="120.7" width="7.2" height="4.2" fill="#e4e4e4"/></g>
</svg>
<!-- CANVAS TOOLBAR -->
<div id="ctb" class="a"></div>
<div class="a" style="left:693px;top:170.3px;width:27px;height:27.4px;border-radius:5px;background:#2e2e30"></div>
<div class="a" style="left:1233px;top:168px;width:122.3px;height:30.7px;border-radius:5px;background:#252526"></div>
<svg style="left:0;top:0" width="1800" height="210" viewBox="0 0 1800 210" fill="none">
<path d="M331 183.3 L340.2 176.5 V180.3 C346.5 180.6 351 184.6 351.4 191.4 C349.2 187.8 345.6 186.2 340.2 186.2 V190.1 Z" stroke="#2e5f59" stroke-width="1.2" stroke-linejoin="round"/>
<path d="M391 183.3 L381.8 176.5 V180.3 C375.5 180.6 371 184.6 370.6 191.4 C372.8 187.8 376.4 186.2 381.8 186.2 V190.1 Z" stroke="#363d5e" stroke-width="1.2" stroke-linejoin="round"/>
<line x1="407.1" y1="171.3" x2="407.1" y2="194.6" stroke="#4c4c4c" stroke-width="1.4"/>
<line x1="538.5" y1="171.3" x2="538.5" y2="194.6" stroke="#4c4c4c" stroke-width="1.4"/>
<line x1="629.4" y1="171.3" x2="629.4" y2="194.6" stroke="#4c4c4c" stroke-width="1.4"/>
<line x1="680.6" y1="171.3" x2="680.6" y2="194.6" stroke="#4c4c4c" stroke-width="1.4"/>
<circle cx="431.6" cy="183.1" r="8.8" stroke="#b4b4b4" stroke-width="1.7"/><path d="M437.8 189.6 L442.0 194.9" stroke="#b4b4b4" stroke-width="1.8" stroke-linecap="round"/><path d="M427.8 183.1 H435.40000000000003" stroke="#86da86" stroke-width="1.3"/>
<circle cx="471.6" cy="183.1" r="8.8" stroke="#b4b4b4" stroke-width="1.7"/><path d="M477.8 189.6 L482.0 194.9" stroke="#b4b4b4" stroke-width="1.8" stroke-linecap="round"/><path d="M467.8 183.1 H475.40000000000003" stroke="#86da86" stroke-width="1.3"/><path d="M471.6 179.2 V187" stroke="#86da86" stroke-width="1.5"/>
<rect x="560.7" y="180.7" width="6.9" height="6.9" fill="#1e2a2a" stroke="#2b524e" stroke-width="1.2"/><path d="M553.5 178.8 H558.8 V173.5 M569.6 173.5 V178.8 H574.4 M574.4 189.2 H569.6 V194.4 M558.8 194.4 V189.2 H553.5" stroke="#424242" stroke-width="1.2"/>
<path d="M593.9 179.4 V173.9 H599.6 M608.6 173.9 H614.3 V179.4 M614.3 188.2 V193.7 H608.6 M599.6 193.7 H593.9 V188.2" stroke="#d4d4d4" stroke-width="1.6"/><rect x="599.3" y="179" width="9.6" height="9.8" fill="#555557" stroke="#82e2e0" stroke-width="1.4"/>
<rect x="645" y="174.2" width="21" height="21" rx="3.4" stroke="#3c3c3c" stroke-width="1.3"/><path d="M652 174.2 V195.2 M659.2 174.2 V195.2 M645 181.3 H666 M645 188.6 H666" stroke="#2a4030" stroke-width="1.2"/>
<path d="M698.8 176.7 H713.4 V181.4 H704 V191.2 H698.8 Z" fill="#16224a" stroke="#2f6dea" stroke-width="1.25" stroke-linejoin="round"/><path d="M704.6 176.7 v2 M707.6 176.7 v2 M710.6 176.7 v2 M698.8 182.6 h2 M698.8 185.6 h2 M698.8 188.6 h2" stroke="#2a5fd0" stroke-width="0.8"/>
<line x1="739.4" y1="173.7" x2="739.4" y2="194" stroke="#394364" stroke-width="1.2"/><rect x="742.5" y="177" width="8.4" height="5.6" rx="1.3" fill="#434345"/><rect x="742.5" y="185.3" width="11.6" height="5.6" rx="1.3" fill="#434345"/>
<line x1="792.5" y1="173.7" x2="792.5" y2="194" stroke="#394364" stroke-width="1.2"/><rect x="781.3" y="177" width="8.4" height="5.6" rx="1.3" fill="#434345"/><rect x="778.1" y="185.3" width="11.6" height="5.6" rx="1.3" fill="#434345"/>
<circle cx="815.3" cy="183.1" r="2.5" fill="#5c5c5c"/><circle cx="823.1" cy="183.1" r="2.5" fill="#5c5c5c"/><circle cx="831" cy="183.1" r="2.5" fill="#5c5c5c"/>
<path d="M1247.9 176.9 L1263.6 173 V184 L1247.9 188.9 Z" fill="#e6e6e6"/><path d="M1250.2 179.4 L1264.6 175.6 V186 L1250.2 190.4 Z" fill="#e0e0e0" stroke="#252526" stroke-width="1.1" stroke-linejoin="round"/><path d="M1252.9 181.7 L1266.5 177.6 V188 L1252.9 192.2 Z" fill="#dcdcdc" stroke="#252526" stroke-width="1.1" stroke-linejoin="round"/>
<path d="M1338.2 179.9 L1343.6 185.9 L1349 179.9" stroke="#e6e6e6" stroke-width="1.5" stroke-linecap="round" stroke-linejoin="round"/>
</svg>
<div class="t" style="left:502.00px;top:175.00px;font-size:16.5px;font-weight:bold;color:#f1de8e;letter-spacing:-1.080px;">1:1</div>
<div class="t" style="left:1275.80px;top:174.00px;font-size:15px;color:#ececec;letter-spacing:-0.009px;">Page 1</div>
<!-- RULERS + CANVAS -->
<div class="a" style="left:319.3px;top:207.5px;width:1028.7px;height:26px;background:#161616"></div>
<div class="a" style="left:319.3px;top:207.5px;width:25px;height:687.5px;background:#161616"></div>
<div class="a" style="left:344.3px;top:233.2px;width:1003.7px;height:676.8px;background:#0d0d0d;border-right:1px solid #1b1b1b"></div>
<svg style="left:0;top:0" width="1800" height="910" viewBox="0 0 1800 910">
<path d="M345.5 228.2V233.2M357.5 228.2V233.2M368.5 228.2V233.2M380.5 228.2V233.2M404.5 228.2V233.2M416.5 228.2V233.2M427.5 228.2V233.2M439.5 228.2V233.2M451.5 228.2V233.2M463.5 228.2V233.2M475.5 228.2V233.2M486.5 228.2V233.2M498.5 228.2V233.2M522.5 228.2V233.2M533.5 228.2V233.2M545.5 228.2V233.2M557.5 228.2V233.2M569.5 228.2V233.2M581.5 228.2V233.2M592.5 228.2V233.2M604.5 228.2V233.2M616.5 228.2V233.2M640.5 228.2V233.2M651.5 228.2V233.2M663.5 228.2V233.2M675.5 228.2V233.2M687.5 228.2V233.2M698.5 228.2V233.2M710.5 228.2V233.2M722.5 228.2V233.2M734.5 228.2V233.2M757.5 228.2V233.2M769.5 228.2V233.2M781.5 228.2V233.2M793.5 228.2V233.2M805.5 228.2V233.2M816.5 228.2V233.2M828.5 228.2V233.2M840.5 228.2V233.2M852.5 228.2V233.2M875.5 228.2V233.2M887.5 228.2V233.2M899.5 228.2V233.2M911.5 228.2V233.2M922.5 228.2V233.2M934.5 228.2V233.2M946.5 228.2V233.2M958.5 228.2V233.2M970.5 228.2V233.2M993.5 228.2V233.2M1005.5 228.2V233.2M1017.5 228.2V233.2M1029.5 228.2V233.2M1040.5 228.2V233.2M1052.5 228.2V233.2M1064.5 228.2V233.2M1076.5 228.2V233.2M1087.5 228.2V233.2M1111.5 228.2V233.2M1123.5 228.2V233.2M1135.5 228.2V233.2M1146.5 228.2V233.2M1158.5 228.2V233.2M1170.5 228.2V233.2M1182.5 228.2V233.2M1194.5 228.2V233.2M1205.5 228.2V233.2M1229.5 228.2V233.2M1241.5 228.2V233.2M1252.5 228.2V233.2M1264.5 228.2V233.2M1276.5 228.2V233.2M1288.5 228.2V233.2M1300.5 228.2V233.2M1311.5 228.2V233.2M1323.5 228.2V233.2M1347.5 228.2V233.2" stroke="#949494" stroke-width="1"/><path d="M392.5 225V233.2M510.5 225V233.2M628.5 225V233.2M746.5 225V233.2M864.5 225V233.2M981.5 225V233.2M1099.5 225V233.2M1217.5 225V233.2M1335.5 225V233.2" stroke="#cacaca" stroke-width="1"/>
<path d="M340.2 238.5H344.3M340.2 249.5H344.3M340.2 261.5H344.3M340.2 273.5H344.3M340.2 285.5H344.3M340.2 296.5H344.3M340.2 320.5H344.3M340.2 332.5H344.3M340.2 343.5H344.3M340.2 355.5H344.3M340.2 367.5H344.3M340.2 379.5H344.3M340.2 390.5H344.3M340.2 402.5H344.3M340.2 414.5H344.3M340.2 437.5H344.3M340.2 449.5H344.3M340.2 461.5H344.3M340.2 473.5H344.3M340.2 484.5H344.3M340.2 496.5H344.3M340.2 508.5H344.3M340.2 520.5H344.3M340.2 531.5H344.3M340.2 555.5H344.3M340.2 567.5H344.3M340.2 578.5H344.3M340.2 590.5H344.3M340.2 602.5H344.3M340.2 614.5H344.3M340.2 625.5H344.3M340.2 637.5H344.3M340.2 649.5H344.3M340.2 672.5H344.3M340.2 684.5H344.3M340.2 696.5H344.3M340.2 708.5H344.3M340.2 719.5H344.3M340.2 731.5H344.3M340.2 743.5H344.3M340.2 755.5H344.3M340.2 766.5H344.3M340.2 790.5H344.3M340.2 802.5H344.3M340.2 813.5H344.3M340.2 825.5H344.3M340.2 837.5H344.3M340.2 849.5H344.3M340.2 860.5H344.3M340.2 872.5H344.3M340.2 884.5H344.3" stroke="#848484" stroke-width="1"/><path d="M336.3 308.5H344.3M336.3 426.5H344.3M336.3 543.5H344.3M336.3 661.5H344.3M336.3 778.5H344.3" stroke="#c4c4c4" stroke-width="1"/>
</svg>
<div class="a" style="left:344px;top:205px;width:1004px;height:22px;overflow:hidden"><div class="t" style="left:44.60px;top:-1.00px;font-size:14px;color:#b6b6b6;letter-spacing:0.000px;">0</div><div class="t" style="left:152.47px;top:-1.00px;font-size:14px;color:#b6b6b6;letter-spacing:1.320px;">500</div><div class="t" style="left:266.45px;top:-1.00px;font-size:14px;color:#b6b6b6;letter-spacing:0.881px;">1000</div><div class="t" style="left:384.33px;top:-1.00px;font-size:14px;color:#b6b6b6;letter-spacing:0.881px;">1500</div><div class="t" style="left:502.20px;top:-1.00px;font-size:14px;color:#b6b6b6;letter-spacing:0.881px;">2000</div><div class="t" style="left:620.08px;top:-1.00px;font-size:14px;color:#b6b6b6;letter-spacing:0.881px;">2500</div><div class="t" style="left:737.95px;top:-1.00px;font-size:14px;color:#b6b6b6;letter-spacing:0.881px;">3000</div><div class="t" style="left:855.83px;top:-1.00px;font-size:14px;color:#b6b6b6;letter-spacing:0.881px;">3500</div><div class="t" style="left:973.70px;top:-1.00px;font-size:14px;color:#b6b6b6;letter-spacing:0.881px;">4000</div></div>
<div class="a" style="left:319.3px;top:233px;width:25px;height:662px;overflow:hidden"><div class="t" style="left:2.80px;top:65.50px;width:7.80px;font-size:14px;color:#a8a8a8;letter-spacing:0.000px;transform:rotate(-90deg)">0</div><div class="t" style="left:-6.96px;top:183.00px;width:27.32px;font-size:14px;color:#a8a8a8;letter-spacing:1.320px;transform:rotate(-90deg)">500</div><div class="t" style="left:-10.91px;top:300.50px;width:35.21px;font-size:14px;color:#a8a8a8;letter-spacing:1.015px;transform:rotate(-90deg)">1000</div><div class="t" style="left:-10.91px;top:418.00px;width:35.21px;font-size:14px;color:#a8a8a8;letter-spacing:1.015px;transform:rotate(-90deg)">1500</div><div class="t" style="left:-10.91px;top:535.50px;width:35.21px;font-size:14px;color:#a8a8a8;letter-spacing:1.015px;transform:rotate(-90deg)">2000</div><div class="t" style="left:-10.91px;top:653.00px;width:35.21px;font-size:14px;color:#a8a8a8;letter-spacing:1.015px;transform:rotate(-90deg)">2500</div></div>
<div class="a" style="left:390.9px;top:306.9px;width:906.2px;height:510.2px;background:#97979b"></div>
<div class="a" style="left:390.9px;top:306.9px;width:906.2px;height:498.30px;background:#a9a9ad"></div>
<svg style="left:0;top:0" width="1800" height="910" viewBox="0 0 1800 910">
<defs><clipPath id="scr"><rect x="390.9" y="306.9" width="906.2" height="498.30"/></clipPath></defs>
<g clip-path="url(#scr)"><path d="M390.90 306.9V805.20M436.20 306.9V805.20M481.50 306.9V805.20M526.80 306.9V805.20M572.10 306.9V805.20M617.40 306.9V805.20M662.70 306.9V805.20M708.00 306.9V805.20M753.30 306.9V805.20M798.60 306.9V805.20M843.90 306.9V805.20M889.20 306.9V805.20M934.50 306.9V805.20M979.80 306.9V805.20M1025.10 306.9V805.20M1070.40 306.9V805.20M1115.70 306.9V805.20M1161.00 306.9V805.20M1206.30 306.9V805.20M1251.60 306.9V805.20M1296.90 306.9V805.20M390.9 306.90H1297.1M390.9 352.20H1297.1M390.9 397.50H1297.1M390.9 442.80H1297.1M390.9 488.10H1297.1M390.9 533.40H1297.1M390.9 578.70H1297.1M390.9 624.00H1297.1M390.9 669.30H1297.1M390.9 714.60H1297.1M390.9 759.90H1297.1M390.9 805.20H1297.1" stroke="#8b8b90" stroke-width="3.2" fill="none"/><path d="M390.90 306.9V805.20M436.20 306.9V805.20M481.50 306.9V805.20M526.80 306.9V805.20M572.10 306.9V805.20M617.40 306.9V805.20M662.70 306.9V805.20M708.00 306.9V805.20M753.30 306.9V805.20M798.60 306.9V805.20M843.90 306.9V805.20M889.20 306.9V805.20M934.50 306.9V805.20M979.80 306.9V805.20M1025.10 306.9V805.20M1070.40 306.9V805.20M1115.70 306.9V805.20M1161.00 306.9V805.20M1206.30 306.9V805.20M1251.60 306.9V805.20M1296.90 306.9V805.20M390.9 306.90H1297.1M390.9 352.20H1297.1M390.9 397.50H1297.1M390.9 442.80H1297.1M390.9 488.10H1297.1M390.9 533.40H1297.1M390.9 578.70H1297.1M390.9 624.00H1297.1M390.9 669.30H1297.1M390.9 714.60H1297.1M390.9 759.90H1297.1M390.9 805.20H1297.1" stroke="#5a5a60" stroke-width="1.7" fill="none"/></g>
<path d="M391.29999999999995 307.29999999999995H1296.6999999999998" stroke="#9c9ca0" stroke-width="1" fill="none"/><path d="M391.29999999999995 307.29999999999995H1296.6999999999998" stroke="#68686e" stroke-width="1" stroke-dasharray="4 4" fill="none"/><path d="M1296.6999999999998 307.29999999999995V816.6999999999999H391.29999999999995V307.29999999999995" stroke="#b0b0b4" stroke-width="1" fill="none"/><path d="M1296.6999999999998 307.29999999999995V816.6999999999999H391.29999999999995V307.29999999999995" stroke="#141414" stroke-width="1" stroke-dasharray="4 4" fill="none"/>
</svg>
<div class="a" style="left:1350.5px;top:513.8px;width:9px;height:74.2px;border-radius:4.5px;background:#494c54"></div>
<div class="a" style="left:749px;top:898px;width:170px;height:9.5px;border-radius:4.7px;background:#494c54"></div>
<!-- RIGHT PANEL -->
<div id="rtabs" class="a"></div>
<div class="t" style="left:1461.80px;top:187.00px;font-size:15px;color:#f2f2f2;letter-spacing:0.253px;">Seams</div>
<div class="t" style="left:1652.00px;top:187.00px;font-size:15px;color:#1f60e2;letter-spacing:0.516px;">Modules</div>
<div class="a" style="left:1587.5px;top:215.8px;width:187.5px;height:3.6px;background:#0f56da"></div>
<div class="sec" style="top:228px;height:36.5px;border-radius:0 0 9px 9px"></div>
<div class="sec" style="top:270px;height:129.5px"></div>
<div class="sec" style="top:405px;height:177.5px"></div>
<div class="sec" style="top:588px;height:330px"></div>
<div class="a" style="left:1787.8px;top:232.5px;width:9.8px;height:492px;border-radius:4.9px;background:#494c54"></div>
<div class="t" style="left:1388.00px;top:237.00px;font-size:19px;font-weight:bold;color:#ffffff;letter-spacing:0.736px;">Multi-Batch</div>
<div class="tog" style="left:1749.2px;top:236.1px"><i></i></div>
<div class="t" style="left:1388.00px;top:286.00px;font-size:19px;font-weight:bold;color:#ffffff;letter-spacing:-0.364px;">Correction</div>
<svg style="left:0;top:0" width="1" height="1"><path d="M1771.90 294.00 l5.60 5.60 l5.60 -5.60" fill="none" stroke="#e0e0e0" stroke-width="1.6" stroke-linecap="round" stroke-linejoin="round"/></svg>
<div class="t" style="left:1388.00px;top:334.00px;font-size:15px;color:#c4c4c4;letter-spacing:0.645px;">Brightness Calibration</div>
<div class="tog" style="left:1748.3px;top:333.9px;width:35.6px"><i></i></div>
<div class="t" style="left:1388.00px;top:369.00px;font-size:15px;color:#c4c4c4;letter-spacing:0.636px;">Brightness and Chroma Calibration</div>
<div class="tog" style="left:1749.1px;top:369.1px;width:35px"><i></i></div>
<div class="t" style="left:1388.00px;top:421.00px;font-size:19px;font-weight:bold;color:#ffffff;letter-spacing:-0.438px;">Select Mode</div>
<svg style="left:0;top:0" width="1" height="1"><circle cx="1730" cy="430.5" r="2.7" fill="#e2e2e2"/><circle cx="1738.2" cy="430.5" r="2.7" fill="#e2e2e2"/><circle cx="1746.3" cy="430.5" r="2.7" fill="#e2e2e2"/></svg>
<svg style="left:0;top:0" width="1" height="1"><path d="M1771.90 428.80 l5.60 5.60 l5.60 -5.60" fill="none" stroke="#e0e0e0" stroke-width="1.6" stroke-linecap="round" stroke-linejoin="round"/></svg>
<div class="t" style="left:1399.30px;top:473.00px;font-size:15px;color:#c8c8c8;letter-spacing:0.799px;">Cabinet</div>
<div class="t" style="left:1503.80px;top:473.00px;font-size:15px;color:#c8c8c8;letter-spacing:0.414px;">LDM</div>
<svg style="left:0;top:0" width="1" height="1"><rect x="1408.0" y="495.0" width="11.2" height="11.2" fill="#2f55f2"/><rect x="1500.0" y="495.0" width="11.5" height="11.5" fill="#c9c9d1"/><rect x="1420.9" y="495.0" width="11.2" height="11.2" fill="#2f55f2"/><rect x="1512.9" y="495.0" width="11.5" height="11.5" fill="#444446"/><rect x="1433.8" y="495.0" width="11.2" height="11.2" fill="#2f55f2"/><rect x="1525.8" y="495.0" width="11.5" height="11.5" fill="#444446"/><rect x="1408.0" y="507.9" width="11.2" height="11.2" fill="#2f55f2"/><rect x="1500.0" y="507.9" width="11.5" height="11.5" fill="#444446"/><rect x="1420.9" y="507.9" width="11.2" height="11.2" fill="#2f55f2"/><rect x="1512.9" y="507.9" width="11.5" height="11.5" fill="#444446"/><rect x="1433.8" y="507.9" width="11.2" height="11.2" fill="#2f55f2"/><rect x="1525.8" y="507.9" width="11.5" height="11.5" fill="#444446"/><rect x="1408.0" y="520.8" width="11.2" height="11.2" fill="#2f55f2"/><rect x="1500.0" y="520.8" width="11.5" height="11.5" fill="#444446"/><rect x="1420.9" y="520.8" width="11.2" height="11.2" fill="#2f55f2"/><rect x="1512.9" y="520.8" width="11.5" height="11.5" fill="#444446"/><rect x="1433.8" y="520.8" width="11.2" height="11.2" fill="#2f55f2"/><rect x="1525.8" y="520.8" width="11.5" height="11.5" fill="#444446"/></svg>
<div class="t" style="left:1412.50px;top:545.00px;font-size:15px;color:#c8c8c8;letter-spacing:0.433px;">(F7)</div>
<div class="t" style="left:1505.00px;top:545.00px;font-size:15px;color:#c8c8c8;letter-spacing:0.433px;">(F8)</div>
<div class="t" style="left:1388.00px;top:603.00px;font-size:19px;font-weight:bold;color:#ffffff;letter-spacing:-0.500px;">Adjustment</div>
<svg style="left:0;top:0" width="1" height="1"><path d="M1771.90 611.40 l5.60 5.60 l5.60 -5.60" fill="none" stroke="#e0e0e0" stroke-width="1.6" stroke-linecap="round" stroke-linejoin="round"/></svg>
<div class="t" style="left:1408.30px;top:650.00px;font-size:15px;color:#c2c2c2;letter-spacing:0.514px;">Brightness</div>
<div class="a" style="left:1408px;top:684.2px;width:245px;height:4.6px;border-radius:2.3px;background:#a9a9b1"></div>
<div class="a" style="left:1648px;top:676.6px;width:19.1px;height:19.1px;border-radius:50%;background:#a9a9b2;box-shadow:0 0 0 2px #161616"></div>
<div class="a" style="left:1688px;top:673.3px;width:95px;height:26px;border-radius:3px 0 0 3px;background:#272728;overflow:hidden"><div class="a" style="left:75px;top:0;width:20px;height:26px;background:#5e5e65"></div></div>
<svg style="left:0;top:0" width="1" height="1"><path d="M1768.9 683.2 L1772.45 678.6 L1776 683.2 Z M1768.9 690.2 L1772.45 694.6 L1776 690.2 Z" fill="#ffffff"/></svg>
<div class="t" style="left:1697.00px;top:678.00px;font-size:15px;color:#f2f2f2;letter-spacing:-0.215px;">100.0%</div>
<div class="sw" style="left:1412px;background:#ececec"></div><div class="sw" style="left:1457px;background:#fb2b2b"></div><div class="sw" style="left:1502px;background:#0cc00c"></div><div class="sw" style="left:1547px;background:#3b83ff"></div><div class="sw" style="left:1590px;background:#34ddf1"></div><div class="sw" style="left:1635px;background:#cd0ed5"></div><div class="sw" style="left:1680px;background:#f6f61b"></div>
<div class="a" style="left:1722.8px;top:724.5px;width:1px;height:38px;background:#4a4a4a"></div>
<svg style="left:1740px;top:714px" width="43" height="35" viewBox="1740 714 43 35">
<rect x="1742.4" y="716.2" width="37.2" height="30.3" rx="2.6" fill="#0c0c0e" stroke="#4a8be2" stroke-width="2.5"/>
<rect x="1745.8" y="720" width="30.4" height="23" fill="#464b56"/>
<clipPath id="tabc"><rect x="1745.8" y="720" width="30.4" height="23"/></clipPath>
<g clip-path="url(#tabc)"><circle cx="1770.8" cy="741.4" r="7.2" fill="#3cb26b"/><circle cx="1755.6" cy="738.6" r="9.8" fill="#40bd72"/></g>
<circle cx="1770.2" cy="726.2" r="4.2" fill="#f5b340"/>
</svg>
<div class="t" style="left:1414.50px;top:753.00px;font-size:15px;color:#c8c8c8;letter-spacing:0.922px;">(W)</div><div class="t" style="left:1461.75px;top:753.00px;font-size:15px;color:#c8c8c8;letter-spacing:0.336px;">(R)</div><div class="t" style="left:1506.25px;top:753.00px;font-size:15px;color:#c8c8c8;letter-spacing:0.414px;">(G)</div><div class="t" style="left:1552.00px;top:753.00px;font-size:15px;color:#c8c8c8;letter-spacing:0.500px;">(B)</div><div class="t" style="left:1595.05px;top:753.00px;font-size:15px;color:#c8c8c8;letter-spacing:0.336px;">(C)</div><div class="t" style="left:1639.05px;top:753.00px;font-size:15px;color:#c8c8c8;letter-spacing:1.000px;">(M)</div><div class="t" style="left:1685.80px;top:753.00px;font-size:15px;color:#c8c8c8;letter-spacing:0.500px;">(Y)</div><div class="t" style="left:1743.05px;top:753.00px;font-size:15px;color:#c8c8c8;letter-spacing:0.578px;">(Tab)</div>
<div class="t" style="left:1446.55px;top:778.00px;font-size:15px;color:#626262;letter-spacing:0.000px;">W</div><div class="t" style="left:1542.50px;top:778.00px;font-size:15px;color:#626262;letter-spacing:0.000px;">R</div><div class="t" style="left:1636.25px;top:778.00px;font-size:15px;color:#626262;letter-spacing:0.000px;">G</div><div class="t" style="left:1731.55px;top:778.00px;font-size:15px;color:#626262;letter-spacing:0.000px;">B</div>
<div class="t" style="left:1423.80px;top:807.00px;font-size:15px;color:#4c4c4c;letter-spacing:0.511px;">(1 + <span class="ar">↑</span>/<span class="ar">↓</span>)</div><div class="t" style="left:1518.00px;top:807.00px;font-size:15px;color:#4c4c4c;letter-spacing:0.549px;">(2 + <span class="ar">↑</span>/<span class="ar">↓</span>)</div><div class="t" style="left:1612.50px;top:807.00px;font-size:15px;color:#4c4c4c;letter-spacing:0.611px;">(3 + <span class="ar">↑</span>/<span class="ar">↓</span>)</div><div class="t" style="left:1707.00px;top:807.00px;font-size:15px;color:#4c4c4c;letter-spacing:0.674px;">(4 + <span class="ar">↑</span>/<span class="ar">↓</span>)</div>
<div class="vs" style="left:1434.3px"><i style="top:7.00px"></i><i style="top:18.25px"></i><i style="top:29.50px"></i><i style="top:40.75px"></i><i style="top:52.00px"></i><i style="top:63.25px"></i></div><div class="vs" style="left:1528px"><i style="top:7.00px"></i><i style="top:18.25px"></i><i style="top:29.50px"></i><i style="top:40.75px"></i><i style="top:52.00px"></i><i style="top:63.25px"></i></div><div class="vs" style="left:1623px"><i style="top:7.00px"></i><i style="top:18.25px"></i><i style="top:29.50px"></i><i style="top:40.75px"></i><i style="top:52.00px"></i><i style="top:63.25px"></i></div><div class="vs" style="left:1716.3px"><i style="top:7.00px"></i><i style="top:18.25px"></i><i style="top:29.50px"></i><i style="top:40.75px"></i><i style="top:52.00px"></i><i style="top:63.25px"></i></div>
</body>
</html>
